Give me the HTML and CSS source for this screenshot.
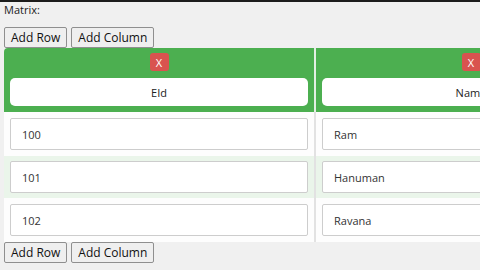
FILE: index.html
```html
<!DOCTYPE html>
<html lang="en">
<head>
    <meta charset="UTF-8">
    <title>Matrix</title>
    <link rel="stylesheet" href="styles.css">
</head>
<body>
<div class="title">Matrix:</div>

<div class="toolbar">
    <button class="btn">Add Row</button>
    <button class="btn">Add Column</button>
</div>

<div class="table-wrap">
    <table class="matrix">
        <thead>
        <tr>
            <th>
                <button class="remove">X</button>
                <input class="head-input" type="text" value="EId">
            </th>
            <th>
                <button class="remove">X</button>
                <input class="head-input" type="text" value="Name">
            </th>
        </tr>
        </thead>
        <tbody>
        <tr>
            <td><input class="cell-input" type="text" value="100"></td>
            <td><input class="cell-input" type="text" value="Ram"></td>
        </tr>
        <tr class="alt">
            <td><input class="cell-input" type="text" value="101"></td>
            <td><input class="cell-input" type="text" value="Hanuman"></td>
        </tr>
        <tr>
            <td><input class="cell-input" type="text" value="102"></td>
            <td><input class="cell-input" type="text" value="Ravana"></td>
        </tr>
        </tbody>
    </table>
</div>

<div class="toolbar">
    <button class="btn">Add Row</button>
    <button class="btn">Add Column</button>
</div>
</body>
</html>
```

FILE: styles.css
```css
html {
    background-color: #f0f0f0;
}
body {
    margin: 0;
    padding: 0 0 0 4px;
    border-top: 2px solid #1c1c1c;
    font-family: "Open Sans", "Noto Sans", sans-serif;
    font-size: 11px;
    color: #222;
    overflow: hidden;
}
.title {
    height: 25px;
    line-height: 14px;
    padding-top: 1px;
    box-sizing: border-box;
}
.toolbar {
    display: flex;
    gap: 4px;
}
.btn {
    height: 21px;
    padding: 0 6px;
    font-family: "Open Sans", "Noto Sans", sans-serif;
    font-size: 12px;
    color: #111;
    background-color: #efefef;
    border: 1px solid #8f8f8f;
    border-radius: 2px;
}
.table-wrap {
    overflow: hidden;
}
.matrix {
    border-collapse: collapse;
    border-spacing: 0;
}
.matrix th {
    width: 298px;
    min-width: 298px;
    padding: 5px 6px 6px;
    background-color: #4caf50;
    vertical-align: top;
}
.matrix th:first-child {
    border-top-left-radius: 4px;
}
.matrix th + th {
    border-left: 2px solid #e3efe3;
}
.remove {
    display: block;
    margin: 0 auto 7px;
    width: 19px;
    height: 18px;
    padding: 0;
    border: none;
    border-radius: 3px;
    background-color: #d9534f;
    color: #fff;
    font-family: "Open Sans", "Noto Sans", sans-serif;
    font-size: 11px;
}
.head-input {
    display: block;
    width: 100%;
    height: 28px;
    box-sizing: border-box;
    border: none;
    border-radius: 5px;
    background-color: #fff;
    text-align: center;
    font-family: "Open Sans", "Noto Sans", sans-serif;
    font-size: 11px;
    color: #222;
}
.matrix td {
    padding: 6px;
    background-color: #fdfdfd;
}
.matrix td + td {
    border-left: 2px solid #e2e2e2;
}
.matrix tr.alt td {
    background-color: #eaf5ea;
    padding: 5px 6px;
}
.cell-input {
    display: block;
    width: 100%;
    height: 32px;
    box-sizing: border-box;
    padding: 0 11px;
    border: 1px solid #cdcdcd;
    border-radius: 2px;
    background-color: #fff;
    font-family: "Open Sans", "Noto Sans", sans-serif;
    font-size: 11px;
    color: #333;
}
```
